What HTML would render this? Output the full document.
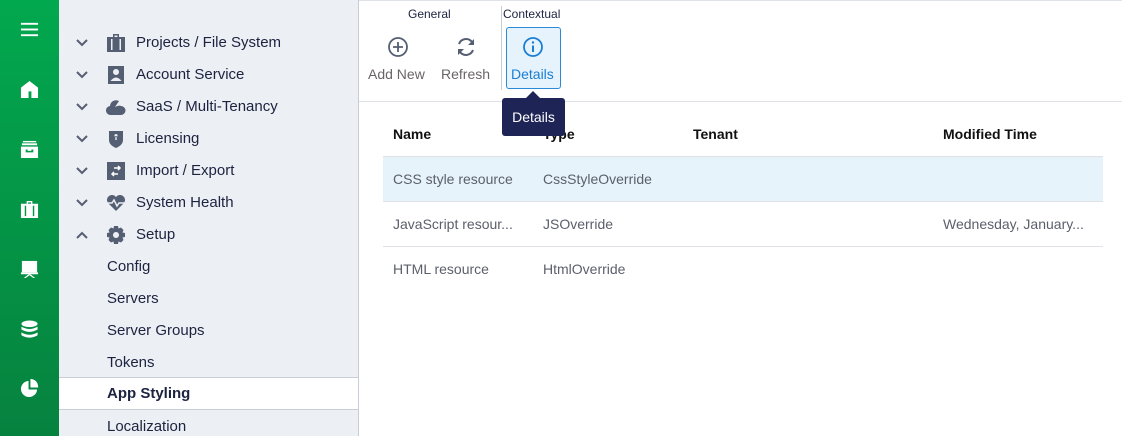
<!DOCTYPE html>
<html><head><meta charset="utf-8"><style>
*{box-sizing:border-box;margin:0;padding:0}
body{width:1122px;height:436px;overflow:hidden;font-family:"Liberation Sans",sans-serif;background:#fff;position:relative;color:#1a1f3a}
.rail{position:absolute;left:0;top:0;width:59px;height:436px;background:linear-gradient(#02a84e,#06823f)}
.rail svg{position:absolute;left:20px;width:19px;height:19px;fill:#fff}
.side{position:absolute;left:59px;top:0;width:300px;height:436px;background:#eceff3;border-right:1px solid #c9ced6}
.it{position:absolute;left:0;height:32px;width:299px;font-size:15px;line-height:33px;color:#1c2340}
.it .ch{position:absolute;left:16px;top:10px;width:14px;height:14px}
.it .ic{position:absolute;left:47px;top:7px;width:20px;height:20px;fill:#555f73}
.it .tx{position:absolute;left:77px}
.sub{left:48px;font-size:15px}
.sel{background:#fff;border-top:1px solid #c9ced6;border-bottom:1px solid #c9ced6;font-weight:bold;left:0;padding-left:48px;width:299px;line-height:31px}
.top{position:absolute;left:0;top:0;width:1122px;height:1px;background:#dfe2e8}
.tb{position:absolute;left:359px;top:101px;width:763px;height:1px;background:#dfe2e8}
.lbl{position:absolute;font-size:12px;color:#1c2340;top:7px}
.btn{position:absolute;top:66px;font-size:14px;color:#6b6466}
.vline{position:absolute;left:501px;top:6px;width:1px;height:84px;background:#c8ccd2}
.det{position:absolute;left:506px;top:27px;width:55px;height:62px;background:#e6f3fc;border:1px solid #2a8ad8;border-radius:3px}
.tip{position:absolute;left:502px;top:98px;width:63px;height:38px;background:#1e2456;border-radius:3px;color:#fff;font-size:14px;line-height:38px;text-align:center}
.tip:before{content:"";position:absolute;left:24px;top:-7px;border-left:7px solid transparent;border-right:7px solid transparent;border-bottom:7px solid #1e2456}
.row{position:absolute;left:383px;width:720px;height:45px;border-bottom:1px solid #dfe2e8;font-size:14px;color:#5b5f6b;line-height:45px}
.row span{position:absolute}
.hd{font-weight:bold;color:#111;top:112px;height:45px}
</style></head><body>
<div class="top"></div>
<div class="rail">
<svg style="top:20px" viewBox="0 0 20 20"><rect x="1" y="3" width="18" height="2"/><rect x="1" y="9" width="18" height="2"/><rect x="1" y="15" width="18" height="2"/></svg>
<svg style="top:80px" viewBox="0 0 20 20"><path d="M10 1 L19 8 V19 H12 V12 H9 V19 H1 V8 Z"/></svg>
<svg style="top:140px" viewBox="0 0 20 20"><rect x="3" y="1" width="14" height="1.5"/><rect x="2" y="3.5" width="16" height="2"/><path d="M1 7 H19 V19 H1 Z M6 10 V13 H14 V10 H12 V11.5 H8 V10 Z" fill-rule="evenodd"/></svg>
<svg style="top:200px" viewBox="0 0 20 20"><path d="M7 1 H13 V4 H19 V19 H1 V4 H7 Z M8.5 2.5 V4 H11.5 V2.5 Z M5 6 V17 H6.5 V6 Z M13.5 6 V17 H15 V6 Z" fill-rule="evenodd"/></svg>
<svg style="top:260px" viewBox="0 0 20 20"><rect x="2" y="1" width="16" height="12"/><rect x="1" y="13" width="18" height="2"/><path d="M9 15 L4 19 H6 L10 16 L14 19 H16 L11 15 Z"/></svg>
<svg style="top:320px" viewBox="0 0 20 20"><ellipse cx="10" cy="4" rx="8.5" ry="3.5"/><path d="M1.5 7 Q10 12 18.5 7 V10 Q10 15 1.5 10Z"/><path d="M1.5 13 Q10 18 18.5 13 V16 Q10 21 1.5 16Z"/></svg>
<svg style="top:379px" viewBox="0 0 20 20"><path d="M9 2 A8.5 8.5 0 1 0 18 11 H9 Z"/><path d="M11 0 A8 8 0 0 1 19 9 H11 Z"/></svg>
</div>
<div class="side">
<div class="it" style="top:26px"><svg class="ch" viewBox="0 0 14 14"><path d="M2 4 L7 9 L12 4" stroke="#555f73" stroke-width="2" fill="none"/></svg><svg class="ic" viewBox="0 0 20 20"><path d="M7 1 H13 V4 H19 V19 H1 V4 H7 Z M8.5 2.5 V4 H11.5 V2.5 Z M5 6 V17 H6.5 V6 Z M13.5 6 V17 H15 V6 Z" fill-rule="evenodd"/></svg><span class="tx">Projects / File System</span></div>
<div class="it" style="top:58px"><svg class="ch" viewBox="0 0 14 14"><path d="M2 4 L7 9 L12 4" stroke="#555f73" stroke-width="2" fill="none"/></svg><svg class="ic" viewBox="0 0 20 20"><path d="M2 1 H18 V19 H2 Z M10 4 A3 3 0 1 0 10.01 4 Z M4.5 16 Q10 9 15.5 16 Z" fill-rule="evenodd"/></svg><span class="tx">Account Service</span></div>
<div class="it" style="top:90px"><svg class="ch" viewBox="0 0 14 14"><path d="M2 4 L7 9 L12 4" stroke="#555f73" stroke-width="2" fill="none"/></svg><svg class="ic" viewBox="0 0 20 20"><path d="M5 18 A4.5 4.5 0 0 1 4 9 A6 6 0 0 1 13 4 L9 10 Q13 8 15 9 A4.5 4.5 0 0 1 15 18 Z"/></svg><span class="tx">SaaS / Multi-Tenancy</span></div>
<div class="it" style="top:122px"><svg class="ch" viewBox="0 0 14 14"><path d="M2 4 L7 9 L12 4" stroke="#555f73" stroke-width="2" fill="none"/></svg><svg class="ic" viewBox="0 0 20 20"><path d="M3 2 H17 V11 Q17 16 10 19 Q3 16 3 11 Z M10 5 A1.6 1.6 0 1 0 10.01 5 Z M9.3 7 V11 H10.7 V7 Z" fill-rule="evenodd"/></svg><span class="tx">Licensing</span></div>
<div class="it" style="top:154px"><svg class="ch" viewBox="0 0 14 14"><path d="M2 4 L7 9 L12 4" stroke="#555f73" stroke-width="2" fill="none"/></svg><svg class="ic" viewBox="0 0 20 20"><path d="M1 1 H19 V19 H1 Z" /><path d="M8 7 H14 M12 5 L14 7 L12 9 M12 13 H6 M8 11 L6 13 L8 15" stroke="#fff" stroke-width="1.5" fill="none"/></svg><span class="tx">Import / Export</span></div>
<div class="it" style="top:186px"><svg class="ch" viewBox="0 0 14 14"><path d="M2 4 L7 9 L12 4" stroke="#555f73" stroke-width="2" fill="none"/></svg><svg class="ic" viewBox="0 0 20 20"><path d="M10 18 L2 10 A4.5 4.5 0 0 1 10 4 A4.5 4.5 0 0 1 18 10 Z"/><path d="M1 10 H6 L8 7 L11 13 L13 10 H19" stroke="#eceff3" stroke-width="1.5" fill="none"/></svg><span class="tx">System Health</span></div>
<div class="it" style="top:218px"><svg class="ch" viewBox="0 0 14 14"><path d="M2 10 L7 5 L12 10" stroke="#555f73" stroke-width="2" fill="none"/></svg><svg class="ic" viewBox="0 0 20 20"><path d="M8 1 H12 L12.5 3.5 L15 2.5 L17.5 5 L16.5 7.5 L19 8 V12 L16.5 12.5 L17.5 15 L15 17.5 L12.5 16.5 L12 19 H8 L7.5 16.5 L5 17.5 L2.5 15 L3.5 12.5 L1 12 V8 L3.5 7.5 L2.5 5 L5 2.5 L7.5 3.5 Z M10 7 A3 3 0 1 0 10.01 7 Z" fill-rule="evenodd"/></svg><span class="tx">Setup</span></div>
<div class="it sub" style="top:250px">Config</div>
<div class="it sub" style="top:282px">Servers</div>
<div class="it sub" style="top:314px">Server Groups</div>
<div class="it sub" style="top:346px">Tokens</div>
<div class="it sel" style="top:377px;height:33px">App Styling</div>
<div class="it sub" style="top:410px">Localization</div>
</div>
<div class="lbl" style="left:408px">General</div>
<div class="lbl" style="left:503px">Contextual</div>
<svg style="position:absolute;left:387px;top:36px" width="22" height="22" viewBox="0 0 22 22"><circle cx="11" cy="11" r="9" stroke="#555f73" stroke-width="1.8" fill="none"/><path d="M11 6 V16 M6 11 H16" stroke="#555f73" stroke-width="1.8"/></svg>
<div class="btn" style="left:368px">Add New</div>
<svg style="position:absolute;left:455px;top:36px" width="22" height="22" viewBox="0 0 22 22"><path d="M4 8 A7.5 7.5 0 0 1 17 6" stroke="#555f73" stroke-width="2" fill="none"/><path d="M18 14 A7.5 7.5 0 0 1 5 16" stroke="#555f73" stroke-width="2" fill="none"/><path d="M19 3 V9 H13 Z M3 19 V13 H9 Z" fill="#555f73"/></svg>
<div class="btn" style="left:441px">Refresh</div>
<div class="vline"></div>
<div class="det"></div>
<svg style="position:absolute;left:522px;top:36px" width="22" height="22" viewBox="0 0 22 22"><circle cx="11" cy="11" r="9" stroke="#1a7fd4" stroke-width="1.8" fill="none"/><path d="M11 9.5 V16" stroke="#1a7fd4" stroke-width="2"/><circle cx="11" cy="6.5" r="1.2" fill="#1a7fd4"/></svg>
<div class="btn" style="left:511px;color:#1a7fd4">Details</div>
<div class="tb"></div>
<div class="row hd"><span style="left:10px">Name</span><span style="left:160px">Type</span><span style="left:310px">Tenant</span><span style="left:560px">Modified Time</span></div>
<div class="row" style="top:157px;background:#e6f3fb"><span style="left:10px">CSS style resource</span><span style="left:160px">CssStyleOverride</span></div>
<div class="row" style="top:202px"><span style="left:10px">JavaScript resour...</span><span style="left:160px">JSOverride</span><span style="left:560px">Wednesday, January...</span></div>
<div class="row" style="top:247px;border-bottom:none"><span style="left:10px">HTML resource</span><span style="left:160px">HtmlOverride</span></div>
<div class="tip">Details</div>
</body></html>
